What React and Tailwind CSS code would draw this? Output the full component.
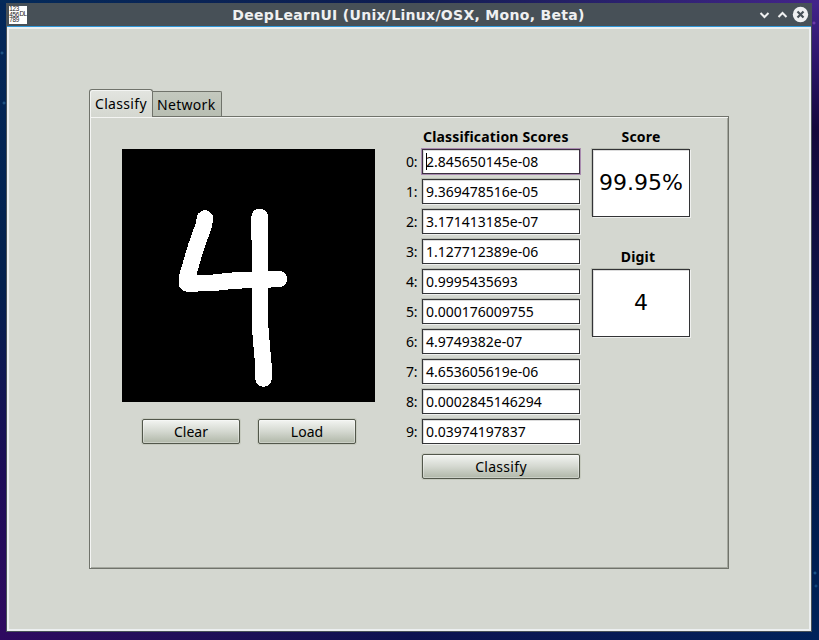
import React from "react";

const scores = [
  "2.845650145e-08",
  "9.369478516e-05",
  "3.171413185e-07",
  "1.127712389e-06",
  "0.9995435693",
  "0.000176009755",
  "4.9749382e-07",
  "4.653605619e-06",
  "0.0002845146294",
  "0.03974197837",
];

function TitleBar() {
  return (
    <div className="flex h-[23px] items-center bg-[#475057]">
      <svg className="ml-[2px] h-[18px] w-[18px] bg-white" viewBox="0 0 18 18">
        <g fill="#222" fontFamily="Liberation Sans" fontSize="6.4">
          <text x="0.3" y="5.2" textLength="10">123</text>
          <text x="0.3" y="10.6" textLength="10">456</text>
          <text x="0.3" y="16" textLength="10">789</text>
          <text x="10.6" y="10" textLength="7.4">DL</text>
        </g>
      </svg>
      <div className="flex-1 pt-px pl-[34px] text-center font-['DejaVu_Sans',sans-serif] text-[14px] leading-[22px] font-bold tracking-[0.3px] whitespace-nowrap text-[#eff0f1]">
        DeepLearnUI (Unix/Linux/OSX, Mono, Beta)
      </div>
      <svg className="h-[18px] w-[55px]" viewBox="0 0 55 18" fill="none">
        <path d="M4.500 7 L8.500 11 L12.500 7" stroke="#eff0f1" strokeWidth="2" />
        <path d="M22.500 11 L26.500 7 L30.500 11" stroke="#eff0f1" strokeWidth="2" />
        <circle cx="44.500" cy="8.500" r="7.700" fill="#eff0f1" />
        <path d="M41.500 5.500 L47.500 11.500 M47.500 5.500 L41.500 11.500" stroke="#475057" strokeWidth="2.200" />
      </svg>
    </div>
  );
}

function Button({ children, className }) {
  return (
    <button
      className={`h-[25px] rounded-[2px] border border-[#52574b] bg-linear-to-b from-[#f3f5f2] via-[#d4d8d0] to-[#b0b7a8] text-center leading-[23px] shadow-[0_0_0_1px_#c6cabf,inset_0_0_0_1px_#ffffff55] ${className}`}
    >
      {children}
    </button>
  );
}

const field =
  "border border-[#333436] bg-white shadow-[-1px_-1px_0_#b9bdb4,1px_1px_0_#eff0ee,inset_1px_1px_0_#dcdcdc]";

function ScoreRow({ index, value }) {
  const focused = index === 0;
  return (
    <div className="flex h-[25px] items-center">
      <span className="w-[16px] tracking-[-0.3px]">{index}:</span>
      <div
        className={
          focused
            ? "flex h-[25px] w-[158px] items-center border border-[#3b2f40] bg-white pl-[3px] shadow-[0_0_0_1px_#a98bb0,inset_1px_1px_0_#dcdcdc]"
            : `flex h-[25px] w-[158px] items-center pl-[3px] ${field}`
        }
      >
        {focused && <span className="mr-[-1px] h-[17px] w-px bg-black" />}
        <span>{value}</span>
      </div>
    </div>
  );
}

function Drawing() {
  return (
    <svg className="h-[253px] w-[253px] bg-black" viewBox="122 149 253 253">
      <g fill="none" stroke="#fff" strokeWidth="16.500" strokeLinecap="round" strokeLinejoin="round" shapeRendering="crispEdges">
        <path d="M205 218.500 L203.500 226 L196 247 L187.500 276 L187 283.500 L211 283 L235 280.500 L279 279" />
        <path d="M259.700 216.800 L260 325 L261.200 340 L263.500 366 L263.500 378.500" />
      </g>
    </svg>
  );
}

export default function App() {
  return (
    <div className="flex h-[640px] w-[819px] flex-col overflow-hidden font-['Noto_Sans','Open_Sans',sans-serif] text-[14px] text-black">
      <div className="h-[3px] bg-linear-to-r from-[#032a5a] via-[#0e1c50] to-[#43248a]" />
      <div className="flex">
        <div className="h-[629px] w-[6px] bg-[radial-gradient(circle_at_2px_50px,#2a6a9c_0,transparent_2px),radial-gradient(circle_at_4px_100px,#2a6a9c_0,transparent_2px),linear-gradient(180deg,#03285a_0%,#02204e_45%,#1c0c58_75%,#2e0a60_100%)]" />
        <div className="h-[629px] w-[806px] border-x border-b border-[#475057]">
          <TitleBar />
          <div className="h-px bg-[#3097d8]" />
          <div className="h-[604px] border-2 border-[#eceff0] bg-[#d4d7d0] pt-[60px] pl-[80px]">
            <div className="flex h-[27px] items-end">
              <div className="relative z-10 mb-[-1px] h-[28px] w-[64px] rounded-t-[3px] border border-b-0 border-[#70736b] bg-linear-to-b from-[#e3e5e0] to-[#d4d7d0] pl-[5px] leading-[27px] tracking-[0.32px] shadow-[inset_1px_1px_0_#f4f5f3]">
                Classify
              </div>
              <div className="h-[25px] w-[69px] rounded-tr-[2px] border border-b-0 border-l-0 border-[#70736b] bg-linear-to-b from-[#c4c9bf] to-[#b8beb2] pl-[4px] leading-[25px] tracking-[0.3px]">
                Network
              </div>
            </div>
            <div className="flex h-[453px] w-[640px] border border-[#70736b] pl-[32px] shadow-[inset_1px_1px_0_#f4f5f3,inset_-1px_-1px_0_#a5a89f]">
              <div className="flex w-[284px] flex-col pt-[32px]">
                <Drawing />
                <div className="mt-[17px] ml-[20px] flex gap-[18px]">
                  <Button className="w-[98px]">Clear</Button>
                  <Button className="w-[98px]">Load</Button>
                </div>
              </div>
              <div className="w-[174px] pt-[10px]">
                <div className="ml-[16px] h-[22px] pl-px leading-[20px] font-bold tracking-[0.18px] whitespace-nowrap">Classification Scores</div>
                <div className="flex flex-col gap-[5px]">
                  {scores.map((value, i) => (
                    <ScoreRow key={i} index={i} value={value} />
                  ))}
                </div>
                <Button className="mt-[10px] ml-[16px] w-[158px] tracking-[0.3px]">Classify</Button>
              </div>
              <div className="ml-[12px] w-[98px] pt-[10px]">
                <div className="h-[22px] text-center leading-[20px] font-bold tracking-[0.2px]">Score</div>
                <div className={`h-[68px] text-center font-['DejaVu_Sans',sans-serif] text-[22px] leading-[66px] ${field}`}>
                  99.95%
                </div>
                <div className="mt-[30px] h-[22px] pr-[6px] text-center leading-[20px] font-bold tracking-[0.2px]">Digit</div>
                <div className={`h-[68px] text-center font-['DejaVu_Sans',sans-serif] text-[22px] leading-[66px] ${field}`}>
                  4
                </div>
              </div>
            </div>
          </div>
        </div>
        <div className="h-[629px] w-[7px] bg-[radial-gradient(circle_at_2px_20px,#8a4ac0_0,transparent_2px),radial-gradient(circle_at_3px_570px,#2a70a8_0,transparent_2px),radial-gradient(circle_at_4px_583px,#1c5a90_0,transparent_2px),linear-gradient(180deg,#43248a_0%,#2a1468_10%,#14083c_20%,#0c1446_50%,#001e50_85%,#002258_100%)]" />
      </div>
      <div className="h-[8px] bg-linear-to-r from-[#2e0a60] via-[#0c1250] to-[#00225a]" />
    </div>
  );
}
